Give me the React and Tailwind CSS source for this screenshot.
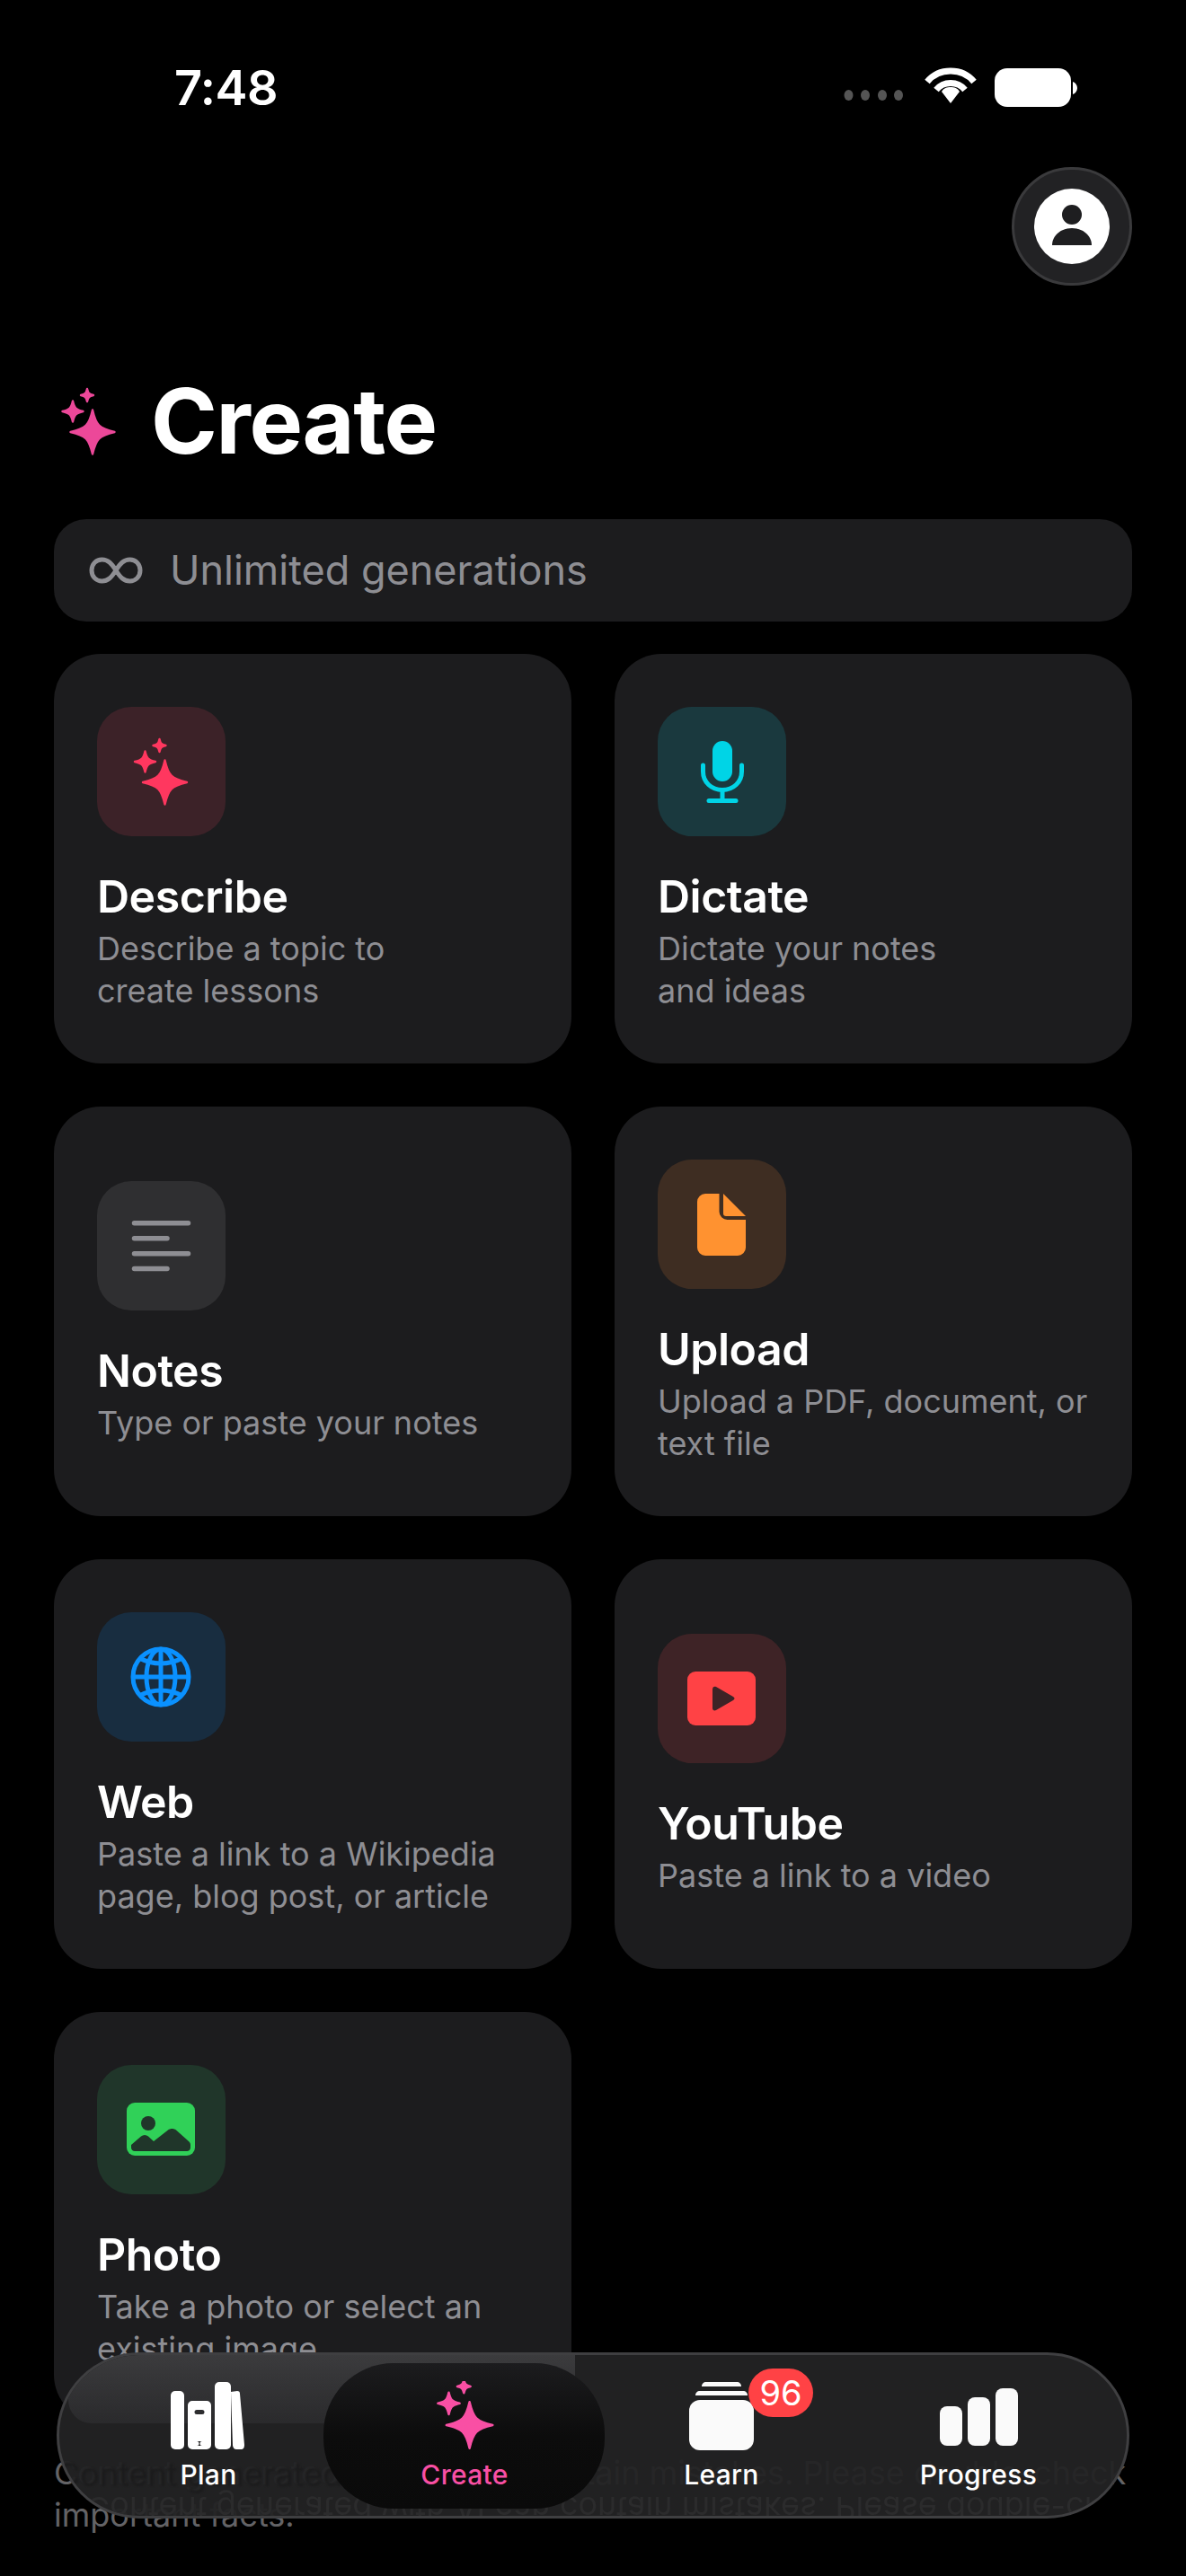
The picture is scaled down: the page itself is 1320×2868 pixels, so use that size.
import React from "react";

function star(r, cx = 0, cy = 0) {
  const a = 0.16 * r, b = 0.3 * r;
  return `M${cx} ${cy - r}C${cx + a} ${cy - b} ${cx + b} ${cy - a} ${cx + r} ${cy}C${cx + b} ${cy + a} ${cx + a} ${cy + b} ${cx} ${cy + r}C${cx - a} ${cy + b} ${cx - b} ${cy + a} ${cx - r} ${cy}C${cx - b} ${cy - a} ${cx - a} ${cy - b} ${cx} ${cy - r}Z`;
}

function SparkGroup({ color, scale = 1, x = 0, y = 0 }) {
  return (
    <g transform={`translate(${x} ${y}) scale(${scale})`} fill={color} stroke={color} strokeWidth="2.4" strokeLinejoin="round">
      <path d={star(24.5)} />
      <path d={star(11.5, -22, -23)} />
      <path d={star(7, -6, -41)} />
    </g>
  );
}

function BoxIcon({ bg, children }) {
  return (
    <div className={`w-[143px] h-[144px] rounded-[38px] shrink-0 ${bg}`}>
      <svg width="143" height="144" viewBox="0 0 143 144" className="block">{children}</svg>
    </div>
  );
}

function Card({ title, lines, bg, children }) {
  return (
    <div className="h-[456px] rounded-[52px] bg-[#1c1c1e] pl-[48px] pr-[20px] pt-[2px] flex flex-col justify-center">
      <BoxIcon bg={bg}>{children}</BoxIcon>
      <div className="mt-[36px] text-[50px] leading-[62px] font-semibold text-white tracking-[-0.5px]">{title}</div>
      <div className="mt-[4px] text-[36px] leading-[47px] text-[#8e8e93]">
        {lines.map((l) => (
          <div key={l} className="whitespace-nowrap">{l}</div>
        ))}
      </div>
    </div>
  );
}

function NavItem({ label, active, w, children }) {
  return (
    <div className="flex flex-col items-center" style={{ width: w }}>
      <svg width="120" height="92" viewBox="0 0 120 92" className="block">{children}</svg>
      <div className={`-mt-[6px] text-[30px] leading-[36px] font-medium tracking-[0.3px] ${active ? "text-[#f94fa4]" : "text-white"}`}>{label}</div>
    </div>
  );
}

export default function App() {
  return (
    <div className="relative w-[1320px] h-[2868px] overflow-hidden bg-black font-[Inter,sans-serif]">
      {/* status bar */}
      <div className="flex items-start h-[186px] pl-[194px] pr-[121px] pt-[68px]">
        <div className="text-[54px] leading-[60px] font-semibold text-white tracking-[-0.5px]">7:48</div>
        <div className="ml-auto flex items-start pt-[3px]">
          <svg width="260" height="48" viewBox="0 0 260 48" className="block">
            <g fill="#555">
              <ellipse cx="5.5" cy="35" rx="5" ry="6" />
              <ellipse cx="24" cy="35" rx="5" ry="6" />
              <ellipse cx="43" cy="35" rx="5" ry="6" />
              <ellipse cx="61" cy="35" rx="5" ry="6" />
            </g>
            <g fill="none" stroke="#fff" strokeWidth="7">
              <path d="M93 20C106 4 132 4 145 20" />
              <path d="M103 29C111 19 127 19 135 29" />
            </g>
            <path d="M119 26C123 26 127 27 129 31L119 44L109 31C111 27 115 26 119 26Z" fill="#fff" />
            <rect x="168" y="5" width="85" height="43" rx="14" fill="#fff" />
            <path d="M255 20C258 21 260 24 260 27C260 30 258 33 255 34Z" fill="#fff" />
          </svg>
        </div>
      </div>

      {/* profile button */}
      <div className="flex justify-end pr-[60px]">
        <div className="w-[134px] h-[132px] rounded-full bg-[#222224] border-[3px] border-[#3a3a3c] flex items-center justify-center">
          <svg width="84" height="84" viewBox="0 0 84 84" className="block">
            <circle cx="42" cy="42" r="42" fill="#fff" />
            <circle cx="42" cy="29" r="11" fill="#1e1e20" />
            <path d="M20 63C20 52 30 44 42 44C54 44 64 52 64 63Z" fill="#1e1e20" />
          </svg>
        </div>
      </div>

      {/* title */}
      <div className="flex items-center pl-[65px] mt-[91px] h-[120px]">
        <svg width="66" height="76" viewBox="-36 -50 62 76" className="block">
          <SparkGroup color="#ec4899" />
        </svg>
        <div className="ml-[37px] text-[100px] leading-[120px] font-bold text-white tracking-[-1.4px]">Create</div>
      </div>

      <div className="px-[60px]">
        {/* banner */}
        <div className="mt-[49px] h-[114px] rounded-[36px] bg-[#1c1c1e] flex items-center pl-[39px]">
          <svg width="60" height="32" viewBox="0 0 60 32" className="block" fill="none" stroke="#8e8e93" strokeWidth="5">
            <path d="M30 16C25 8 21 4 14.5 4C8 4 3 9 3 16C3 23 8 28 14.5 28C21 28 25 24 30 16C35 8 39 4 45.5 4C52 4 57 9 57 16C57 23 52 28 45.5 28C39 28 35 24 30 16Z" />
          </svg>
          <div className="ml-[30px] text-[45px] leading-[56px] text-[#8e8e93]">Unlimited generations</div>
        </div>

        {/* cards */}
        <div className="mt-[36px] grid grid-cols-2 gap-x-[48px] gap-y-[48px]">
          <Card title="Describe" lines={["Describe a topic to", "create lessons"]} bg="bg-[#3c2228]">
            <SparkGroup color="#ff375f" x={75.5} y={84} />
          </Card>
          <Card title="Dictate" lines={["Dictate your notes", "and ideas"]} bg="bg-[#1a393e]">
            <g fill="none" stroke="#00d4e6" strokeWidth="5" strokeLinecap="round">
              <rect x="61" y="38" width="22" height="45" rx="11" fill="#00d4e6" stroke="none" />
              <path d="M50.5 65V72C50.5 84 60 92.5 72 92.5C84 92.5 93.5 84 93.5 72V65" />
              <path d="M72 93V104" strokeLinecap="butt" />
              <path d="M57 104.5H87" />
            </g>
          </Card>
          <Card title="Notes" lines={["Type or paste your notes"]} bg="bg-[#2f2f31]">
            <g stroke="#8e8e93" strokeWidth="5.5" strokeLinecap="round">
              <path d="M41.5 46.7H101.5" />
              <path d="M41.5 63.7H78" />
              <path d="M41.5 80.7H101.5" />
              <path d="M41.5 97.4H78" />
            </g>
          </Card>
          <Card title="Upload" lines={["Upload a PDF, document, or", "text file"]} bg="bg-[#3e2d22]">
            <path fill="#ff9230" d="M53 38H68.5V58A9 9 0 0 0 77.5 67H98V98A9 9 0 0 1 89 107H53A9 9 0 0 1 44 98V47A9 9 0 0 1 53 38Z" />
            <path fill="#ff9230" d="M73 38L98 63H76A3 3 0 0 1 73 60Z" />
          </Card>
          <Card title="Web" lines={["Paste a link to a Wikipedia", "page, blog post, or article"]} bg="bg-[#182d40]">
            <g fill="none" stroke="#0a91ff" strokeWidth="5">
              <circle cx="71" cy="72" r="31" />
              <ellipse cx="71" cy="72" rx="16" ry="31" />
              <path d="M71 41V103" />
              <path d="M40 72H102" />
              <path d="M47 51C62 59 80 59 95 51" />
              <path d="M47 93C62 85 80 85 95 93" />
            </g>
          </Card>
          <Card title="YouTube" lines={["Paste a link to a video"]} bg="bg-[#3e2326]">
            <rect x="33" y="42" width="76" height="60" rx="9" fill="#ff4245" />
            <path d="M61 62C61 59 63 58 65 59L84 70C86 71 86 73 84 74L65 85C63 86 61 85 61 83Z" fill="#3e2326" />
          </Card>
          <Card title="Photo" lines={["Take a photo or select an", "existing image"]} bg="bg-[#20362a]">
            <rect x="33" y="42" width="76" height="59" rx="9" fill="#30d158" />
            <circle cx="57" cy="65" r="8" fill="#20362a" />
            <path fill="#20362a" d="M38 89L49 79.5C51.5 77.5 54.5 77.5 57 79.5L63 85L79 72.5C81.5 70.5 85.5 70.5 88 72.5L102 85C103.5 86.5 104 87.5 104 89V92C104 94.5 102 96 100 96H42C40 96 38 94.5 38 92Z" />
          </Card>
        </div>

        {/* disclaimer */}
        <div className="mt-[34px] text-[36px] leading-[47px] text-[#636366]">
          Content generated with AI can contain mistakes. Please double-check important facts.
        </div>
      </div>

      {/* floating nav */}
      <div className="absolute left-[63px] top-[2619px] w-[1194px] h-[185px] rounded-[92px] overflow-hidden border-[3px] border-[#3f3f41] bg-[rgba(35,35,36,0.95)] flex items-start">
        {/* mirrored glass refraction */}
        <div className="absolute left-[30px] top-[147px] w-[1160px] -scale-y-100 text-[36px] leading-[47px] text-[#2b2b2c] whitespace-nowrap">
          Content generated with AI can contain mistakes. Please double-check
        </div>
        {/* refracted card */}
        <div className="absolute left-[10px] top-[-3px] w-[564px] h-[79px] rounded-b-[26px] bg-gradient-to-b from-[#3c3c3e] to-[#2a2a2c]" />
        {/* refracted disclaimer */}
        <div className="absolute left-[-3px] top-[110px] text-[36px] leading-[47px] text-[#1b1b1c] whitespace-nowrap blur-[1px]">Content generated</div>
        {/* active pill */}
        <div className="absolute left-[294px] top-[9px] w-[313px] h-[162px] rounded-[78px] bg-gradient-to-b from-[#1c1c1e] via-[#0c0c0c] to-[#0a0a0a]" />

        <div className="relative flex w-full pl-[24px] pt-[29px]">
          <NavItem label="Plan" w="284px">
            <g fill="#fff" transform="translate(-3 0)">
              <rect x="21" y="11" width="15" height="65" rx="5" />
              <path fillRule="evenodd" d="M45 22H61A5 5 0 0 1 66 27V71A5 5 0 0 1 61 76H45A5 5 0 0 1 40 71V27A5 5 0 0 1 45 22ZM50 32A2.5 2.5 0 0 0 50 37H56A2.5 2.5 0 0 0 56 32ZM50 72A2.5 2.5 0 0 0 50 67H56A2.5 2.5 0 0 0 56 72Z" />
              <rect x="70" y="1" width="18" height="75" rx="5" />
              <path d="M88 12L95 11C97 11 98 12 98 14L103 71C103 74 102 76 99 76H94C92 76 91 75 90 72Z" />
            </g>
          </NavItem>
          <NavItem label="Create" active w="286px">
            <SparkGroup color="#f94fa4" x={65.6} y={49} scale={1.05} />
          </NavItem>
          <NavItem label="Learn" w="286px">
            <g fill="#fafafa">
              <rect x="24" y="21" width="72" height="56" rx="12" />
              <path d="M31 16C31 13 33 11 36 11H84C87 11 89 13 89 16Z" />
              <path d="M38 6C38 3 40 1 43 1H77C80 1 82 3 82 6Z" />
            </g>
          </NavItem>
          <NavItem label="Progress" w="286px">
            <g fill="#fafafa">
              <rect x="17" y="28" width="25" height="44" rx="8" />
              <rect x="48" y="18" width="25" height="54" rx="8" />
              <rect x="79" y="8" width="25" height="64" rx="8" />
            </g>
          </NavItem>
        </div>

        {/* badge */}
        <div className="absolute left-[767px] top-[15px] w-[72px] h-[54px] rounded-[27px] bg-[#ff4245] flex items-center justify-center text-[38px] leading-[54px] text-white">96</div>
      </div>
    </div>
  );
}
